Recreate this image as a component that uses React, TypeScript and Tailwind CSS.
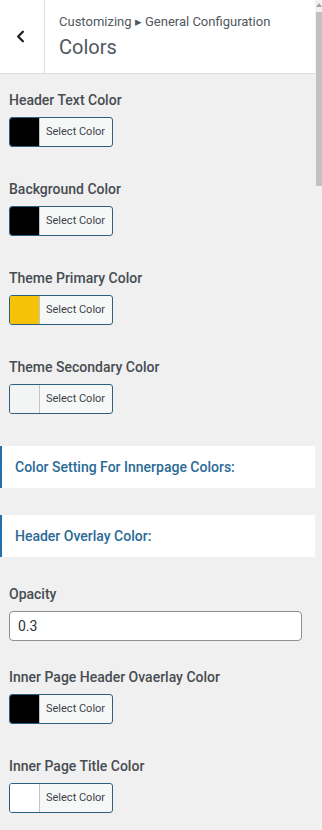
import { ChevronLeft } from "lucide-react";

type ColorControl = { label: string; swatch: string };

const TOP_COLORS: ColorControl[] = [
  { label: "Header Text Color", swatch: "#000000" },
  { label: "Background Color", swatch: "#000000" },
  { label: "Theme Primary Color", swatch: "#f5c207" },
  { label: "Theme Secondary Color", swatch: "#f3f4f4" },
];

const INNER_COLORS: ColorControl[] = [
  { label: "Inner Page Header Ovaerlay Color", swatch: "#000000" },
  { label: "Inner Page Title Color", swatch: "#ffffff" },
];

function ColorPicker({ label, swatch }: ColorControl) {
  return (
    <div className="mb-[32px]">
      <div className="text-[14px] leading-[20px] font-medium text-[#474c52] mb-[7px]">{label}</div>
      <button className="flex h-[30px] w-[104px] items-stretch overflow-hidden rounded-[3px] border border-[#2e5f80] bg-[#f6f7f7]">
        <span className="w-[30px] shrink-0 border-r border-[#c3c4c7]" style={{ backgroundColor: swatch }} />
        <span className="flex flex-1 items-center pl-[6px] text-[11px] text-[#3c434a]">Select Color</span>
      </button>
    </div>
  );
}

function SectionHeading({ title }: { title: string }) {
  return (
    <div className="flex h-[42px] items-center border-l-2 border-[#2271b1] bg-white pl-[13px] text-[14px] font-medium text-[#2a6a96]">
      {title}
    </div>
  );
}

export default function App() {
  return (
    <div className="flex h-[830px] w-[322px] overflow-hidden bg-[#f0f0f0] font-['Roboto',sans-serif]">
      <div className="w-[315px] shrink-0">
        {/* customizer header */}
        <div className="flex h-[74px] border-b border-[#dcdcde] bg-white">
          <div className="flex w-[45px] items-center justify-center border-r border-[#dcdcde] text-[#1d2327]">
            <ChevronLeft size={19} strokeWidth={3} className="-ml-[4px]" />
          </div>
          <div className="pl-[14px] pt-[13px] text-[#50575e]">
            <div className="text-[13px] leading-[18px]">Customizing ▸ General Configuration</div>
            <div className="mt-[3px] text-[20px] leading-[26px]">Colors</div>
          </div>
        </div>

        <div className="pt-[16px]">
          <div className="px-[9px]">
            {TOP_COLORS.map((c) => (
              <ColorPicker key={c.label} {...c} />
            ))}
          </div>

          <div className="mb-[27px]">
            <SectionHeading title="Color Setting For Innerpage Colors:" />
          </div>
          <SectionHeading title="Header Overlay Color:" />

          <div className="px-[9px] pt-[27px]">
            <div className="mb-[26px]">
              <div className="text-[14px] leading-[20px] font-medium text-[#474c52] mb-[7px]">Opacity</div>
              <div className="flex h-[30px] w-[293px] items-center rounded-[4px] border border-[#8c8f94] bg-white px-[8px] text-[14px] text-[#2c3338]">
                0.3
              </div>
            </div>
            {INNER_COLORS.map((c) => (
              <ColorPicker key={c.label} {...c} />
            ))}
          </div>
        </div>
      </div>

      {/* scrollbar */}
      <div className="flex w-[7px] flex-col bg-[#f1f1f1]">
        <div className="flex h-[12px] items-start justify-center pt-[3px]">
          <div className="h-0 w-0 border-x-[3px] border-b-[4px] border-x-transparent border-b-[#a3a3a3]" />
        </div>
        <div className="ml-[1px] h-[174px] bg-[#c1c1c1]" />
      </div>
    </div>
  );
}
